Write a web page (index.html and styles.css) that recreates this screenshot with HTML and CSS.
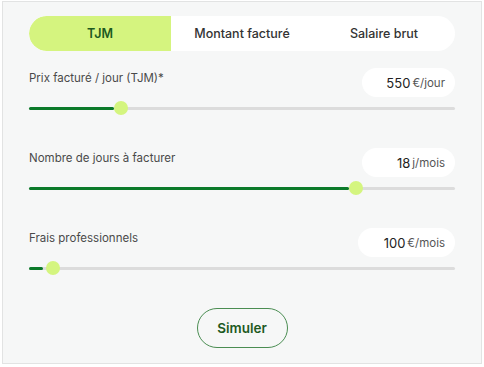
FILE: index.html
```html
<html>
  <head>
    <title>Simulateur</title>
    <link rel="stylesheet" href="styles.css">
  </head>
  <body>
    <div class="panel">
      <div class="tabs">
        <button class="tab active">TJM</button>
        <button class="tab">Montant facturé</button>
        <button class="tab">Salaire brut</button>
      </div>

      <div class="field">
        <div class="row">
          <label class="label">Prix facturé / jour (TJM)*</label>
          <div class="value"><span class="num">550</span><span class="unit">€/jour</span></div>
        </div>
        <div class="slider">
          <div class="fill" style="width: 20%"></div>
          <div class="thumb" style="left: 20%"></div>
        </div>
      </div>

      <div class="field">
        <div class="row">
          <label class="label">Nombre de jours à facturer</label>
          <div class="value"><span class="num">18</span><span class="unit">j/mois</span></div>
        </div>
        <div class="slider">
          <div class="fill" style="width: 75.1%"></div>
          <div class="thumb" style="left: 75.1%"></div>
        </div>
      </div>

      <div class="field">
        <div class="row">
          <label class="label">Frais professionnels</label>
          <div class="value wide"><span class="num">100</span><span class="unit">€/mois</span></div>
        </div>
        <div class="slider">
          <div class="fill" style="width: 3.3%"></div>
          <div class="thumb" style="left: 4%"></div>
        </div>
      </div>

      <div class="actions">
        <button class="btn">Simuler</button>
      </div>
    </div>
  </body>
</html>
```

FILE: styles.css
```css
body {
  margin: 0;
  padding: 1px 2px 0 2px;
  background-color: white;
  font-family: Inter, "Noto Sans", sans-serif;
}
.panel {
  width: 480px;
  height: 363px;
  border: 1px solid #e2e3e3;
  background-color: #f6f7f7;
  padding: 14px 26px 0 26px;
  box-sizing: border-box;
}
.tabs {
  display: flex;
  height: 35px;
  background-color: white;
  border-radius: 18px;
  overflow: hidden;
}
.tab {
  flex: 1;
  border: none;
  background: none;
  font-family: inherit;
  font-size: 12.5px;
  font-weight: 500;
  color: #333;
  padding: 0;
}
.tab.active {
  background-color: #d5f47f;
  color: #1d5a1f;
  font-weight: 600;
  border-radius: 18px 0 0 18px;
}
.field {
  margin-top: 17px;
}
.field + .field {
  margin-top: 33px;
}
.row {
  display: flex;
  justify-content: space-between;
  align-items: flex-start;
}
.label {
  font-size: 11.5px;
  color: #4a4a4a;
  padding-top: 3px;
}
.value {
  min-width: 93px;
  height: 29px;
  background-color: white;
  border-radius: 15px;
  display: flex;
  align-items: center;
  justify-content: flex-end;
  padding: 0 10px 0 20px;
  box-sizing: border-box;
}
.value.wide {
  min-width: 97px;
}
.num {
  font-size: 13px;
  color: #222;
  margin-right: 2px;
}
.unit {
  font-size: 11.5px;
  color: #555;
}
.slider {
  position: relative;
  height: 14px;
  margin-top: 4px;
}
.slider::before {
  content: "";
  position: absolute;
  left: 0;
  right: 0;
  top: 6px;
  height: 3px;
  background-color: #dcdcdc;
  border-radius: 2px;
}
.fill {
  position: absolute;
  left: 0;
  top: 5.5px;
  height: 3.5px;
  background-color: #0b7a2a;
  border-radius: 2px;
}
.thumb {
  position: absolute;
  top: 0;
  width: 14px;
  height: 14px;
  border-radius: 50%;
  background-color: #d4f57f;
}
.actions {
  display: flex;
  justify-content: center;
  margin-top: 33px;
}
.btn {
  width: 91px;
  height: 40px;
  border: 1.5px solid #4a8d52;
  border-radius: 20px;
  background: none;
  font-family: inherit;
  font-size: 13.5px;
  font-weight: 600;
  color: #1d5a1f;
}
```
